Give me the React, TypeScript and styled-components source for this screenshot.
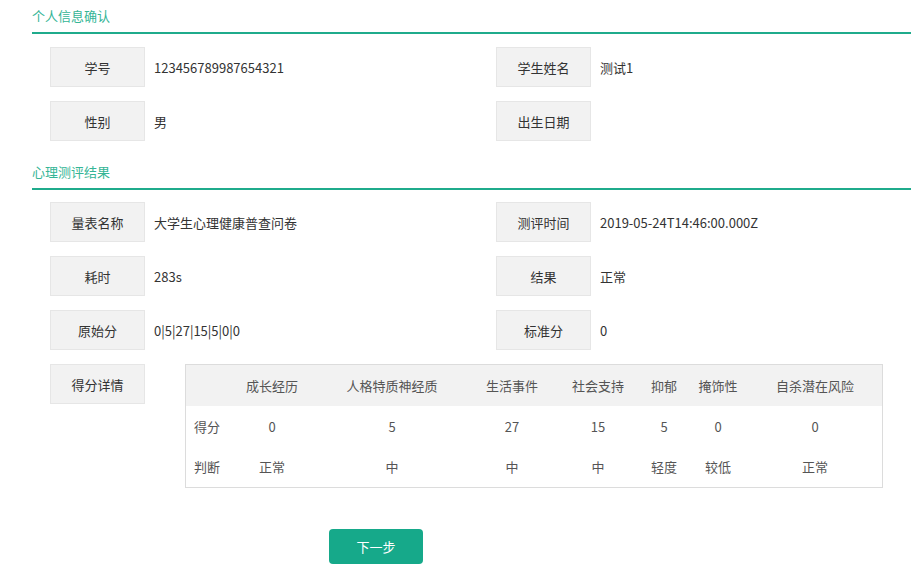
import React from 'react';
import styled, { createGlobalStyle } from 'styled-components';

const GlobalStyle = createGlobalStyle`
  body {
    margin: 0;
    background: #fff;
    font-family: "Noto Sans CJK SC", "Noto Sans", sans-serif;
    color: #333;
  }
`;

const Page = styled.div`
  padding-left: 32px;
  padding-bottom: 8px;
`;

const SectionTitle = styled.div<{ top?: number }>`
  margin-top: ${({ top }) => top || 0}px;
  height: 32px;
  line-height: 32px;
  font-size: 13px;
  color: #35b596;
  border-bottom: 2px solid #1fab8c;
`;

const InfoGrid = styled.div<{ top: number }>`
  display: grid;
  grid-template-columns: 446px 1fr;
  row-gap: 14px;
  margin-top: ${({ top }) => top}px;
  padding-left: 18px;
`;

const Field = styled.div`
  display: flex;
  align-items: center;
`;

const FieldWide = styled(Field)`
  grid-column: 1 / -1;
  align-items: flex-start;
`;

const Label = styled.div`
  box-sizing: border-box;
  width: 95px;
  height: 40px;
  flex-shrink: 0;
  display: flex;
  align-items: center;
  justify-content: center;
  background: #f2f2f2;
  border: 1px solid #e6e6e6;
  font-size: 13px;
  color: #333;
`;

const Value = styled.div`
  margin-left: 9px;
  font-size: 13px;
  color: #333;
`;

const ScoreTable = styled.div`
  box-sizing: border-box;
  width: 698px;
  margin-left: 40px;
  border: 1px solid #dcdcdc;
  font-size: 13px;
  color: #555;
`;

const TableRow = styled.div<{ head?: boolean; h: number }>`
  display: grid;
  grid-template-columns: 42px 88px 152px 88px 84px 48px 60px 1fr;
  height: ${({ h }) => h}px;
  align-items: center;
  background: ${({ head }) => (head ? '#f2f2f2' : '#fff')};
`;

const Cell = styled.div`
  text-align: center;
  white-space: nowrap;
`;

const Footer = styled.div`
  margin-top: 41px;
  padding-left: 297px;
`;

const NextButton = styled.button`
  width: 94px;
  height: 35px;
  border: none;
  border-radius: 4px;
  background: #16a98a;
  color: #fff;
  font-family: inherit;
  font-size: 13px;
  cursor: pointer;
`;

const headers = ['', '成长经历', '人格特质神经质', '生活事件', '社会支持', '抑郁', '掩饰性', '自杀潜在风险'];
const scores = ['得分', '0', '5', '27', '15', '5', '0', '0'];
const judges = ['判断', '正常', '中', '中', '中', '轻度', '较低', '正常'];

const App: React.FC = () => {
  return (
    <>
      <GlobalStyle />
      <Page>
        <SectionTitle>个人信息确认</SectionTitle>
        <InfoGrid top={13}>
          <Field>
            <Label>学号</Label>
            <Value>123456789987654321</Value>
          </Field>
          <Field>
            <Label>学生姓名</Label>
            <Value>测试1</Value>
          </Field>
          <Field>
            <Label>性别</Label>
            <Value>男</Value>
          </Field>
          <Field>
            <Label>出生日期</Label>
            <Value></Value>
          </Field>
        </InfoGrid>

        <SectionTitle top={15}>心理测评结果</SectionTitle>
        <InfoGrid top={12}>
          <Field>
            <Label>量表名称</Label>
            <Value>大学生心理健康普查问卷</Value>
          </Field>
          <Field>
            <Label>测评时间</Label>
            <Value>2019-05-24T14:46:00.000Z</Value>
          </Field>
          <Field>
            <Label>耗时</Label>
            <Value>283s</Value>
          </Field>
          <Field>
            <Label>结果</Label>
            <Value>正常</Value>
          </Field>
          <Field>
            <Label>原始分</Label>
            <Value>0|5|27|15|5|0|0</Value>
          </Field>
          <Field>
            <Label>标准分</Label>
            <Value>0</Value>
          </Field>
          <FieldWide>
            <Label>得分详情</Label>
            <ScoreTable>
              <TableRow head h={41}>
                {headers.map((h, i) => (
                  <Cell key={i}>{h}</Cell>
                ))}
              </TableRow>
              <TableRow h={40}>
                {scores.map((s, i) => (
                  <Cell key={i}>{s}</Cell>
                ))}
              </TableRow>
              <TableRow h={41}>
                {judges.map((s, i) => (
                  <Cell key={i}>{s}</Cell>
                ))}
              </TableRow>
            </ScoreTable>
          </FieldWide>
        </InfoGrid>

        <Footer>
          <NextButton>下一步</NextButton>
        </Footer>
      </Page>
    </>
  );
};

export default App;
